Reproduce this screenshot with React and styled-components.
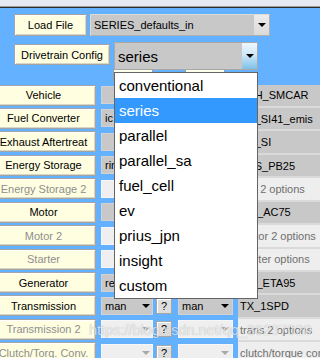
import React from 'react';
import styled, { createGlobalStyle } from 'styled-components';

const GlobalStyle = createGlobalStyle`
  html, body {
    margin: 0;
    padding: 0;
  }
  body {
    background: #63b1ff;
    font-family: "Liberation Sans", Arial, sans-serif;
    overflow: hidden;
  }
`;

const Page = styled.div`
  position: relative;
  width: 320px;
  height: 358px;
  overflow: hidden;
  background: #63b1ff;
`;

const TopStrip = styled.div`
  height: 6px;
  background: #e6e8f2;
  border-bottom: 1px solid #9a9a9a;
  box-shadow: 0 1px 0 #2c2c2c;
  margin-bottom: 1px;
`;

const Main = styled.div`
  padding: 6px 0 0 14px;
`;

const FileRow = styled.div`
  display: flex;
  align-items: flex-start;
  gap: 3px;
  height: 22px;
  margin-bottom: 6px;
`;

const ConfigRow = styled.div`
  display: flex;
  align-items: flex-start;
  gap: 4px;
  height: 28px;
`;

const YellowButton = styled.div`
  box-sizing: border-box;
  width: ${(p) => p.$w}px;
  height: ${(p) => p.$h || 21}px;
  margin-top: ${(p) => p.$top || 0}px;
  display: flex;
  align-items: center;
  justify-content: center;
  background: #fffee0;
  border: 1px solid #a4a4a4;
  box-shadow: inset 1px 1px 0 #ffffff, inset -1px -1px 0 #d6d6c4;
  font-size: 11px;
  color: ${(p) => (p.$disabled ? '#8e8e8e' : '#000')};
  white-space: nowrap;
  overflow: hidden;
  flex-shrink: 0;
`;

const FileSelect = styled.div`
  box-sizing: border-box;
  width: 180px;
  height: 22px;
  display: flex;
  align-items: center;
  background: #c8c8c8;
  border: 1px solid #dcdcdc;
  border-right-color: #b0b0b0;
  border-bottom-color: #b0b0b0;
  font-size: 11px;
  color: #000;
`;

const SelectText = styled.span`
  flex: 1;
  padding-left: ${(p) => p.$pad || 3}px;
  white-space: nowrap;
  overflow: hidden;
`;

const ArrowBox = styled.div`
  width: ${(p) => p.$w || 14}px;
  height: 100%;
  display: flex;
  align-items: center;
  justify-content: center;
  background: ${(p) =>
    p.$blue
      ? 'linear-gradient(#eef7fd, #cfe8f8 45%, #7ec0e8)'
      : p.$plain
      ? 'transparent'
      : 'linear-gradient(#ececec, #dadada)'};
  flex-shrink: 0;
`;

const Tri = styled.span`
  width: 0;
  height: 0;
  border-left: 4px solid transparent;
  border-right: 4px solid transparent;
  border-top: 4px solid ${(p) => (p.$disabled ? '#a8a8a8' : '#000')};
`;

const SeriesWrap = styled.div`
  position: relative;
  width: 144px;
  height: 28px;
`;

const SeriesSelect = styled.div`
  box-sizing: border-box;
  height: 100%;
  display: flex;
  align-items: center;
  background: #c8c8c8;
  border: 1px solid #a9a9a9;
  font-size: 15px;
  color: #000;
`;

const DropList = styled.ul`
  position: absolute;
  left: 0;
  top: 30px;
  z-index: 10;
  box-sizing: border-box;
  width: 144px;
  margin: 0;
  padding: 0;
  list-style: none;
  background: #fff;
  border: 1px solid #646464;
  font-size: 15px;
`;

const DropItem = styled.li`
  height: 25px;
  line-height: 25px;
  padding-left: 4px;
  color: ${(p) => (p.$active ? '#fff' : '#000')};
  background: ${(p) => (p.$active ? '#3399ff' : 'transparent')};
`;

const HeaderRow = styled.div`
  display: flex;
  height: 14.5px;
  padding-left: 99px;
  gap: 32px;
`;

const HeaderTab = styled.div`
  box-sizing: border-box;
  width: 40px;
  height: 12px;
  margin-top: -1px;
  background: #fdfdec;
  border: 1px solid #9c9c9c;
`;

const Rows = styled.div`
  display: flex;
  flex-direction: column;
  gap: 2.45px;
  margin-left: -23px;
`;

const Row = styled.div`
  display: flex;
  align-items: center;
  height: 21px;
`;

const Field = styled.div`
  box-sizing: border-box;
  width: ${(p) => p.$w}px;
  height: ${(p) => p.$h || 18}px;
  margin-left: ${(p) => p.$ml}px;
  display: flex;
  align-items: center;
  background: ${(p) => (p.$disabled ? '#efefef' : '#c8c8c8')};
  border: 1px solid ${(p) => (p.$disabled ? '#f6f6f6' : '#d2d2d2')};
  font-size: 11px;
  color: ${(p) => (p.$disabled ? '#7a7a7a' : '#000')};
  flex-shrink: 0;
`;

const InfoField = styled.div`
  box-sizing: border-box;
  flex: 1;
  height: 23.45px;
  margin-left: 5px;
  margin-bottom: -2.45px;
  display: flex;
  align-items: center;
  padding-left: 2px;
  background: ${(p) => (p.$disabled ? '#eeeeee' : '#c8c8c8')};
  border-bottom: 2px solid #dadada;
  font-size: 11px;
  color: ${(p) => (p.$disabled ? '#6e6e6e' : '#000')};
  white-space: nowrap;
  overflow: hidden;
`;

const HelpButton = styled.div`
  box-sizing: border-box;
  width: 16px;
  height: 16px;
  margin-left: 3px;
  display: flex;
  align-items: center;
  justify-content: center;
  background: #dedede;
  border: 1px solid #a6a6a6;
  box-shadow: inset 1px 1px 0 #fff;
  font-size: 11px;
  color: #000;
  flex-shrink: 0;
`;

const Watermark = styled.div`
  position: absolute;
  left: 89px;
  top: 322px;
  font-size: 14.5px;
  color: rgba(255, 255, 255, 0.72);
  text-shadow: 0 0 1px rgba(0, 0, 0, 0.3);
  white-space: nowrap;
  pointer-events: none;
  z-index: 20;
`;

const options = [
  'conventional',
  'series',
  'parallel',
  'parallel_sa',
  'fuel_cell',
  'ev',
  'prius_jpn',
  'insight',
  'custom',
];

const rows = [
  { label: 'Vehicle', c1: '', c3: 'VEH_SMCAR' },
  { label: 'Fuel Converter', c1: 'ic', c3: 'FC_SI41_emis' },
  { label: 'Exhaust Aftertreat', c1: '', c3: 'EX_SI' },
  { label: 'Energy Storage', c1: 'rint', c3: 'ESS_PB25' },
  { label: 'Energy Storage 2', disabled: true, c3: 'ess 2 options' },
  { label: 'Motor', c1: '', c3: 'MC_AC75' },
  { label: 'Motor 2', disabled: true, c3: 'motor 2 options' },
  { label: 'Starter', disabled: true, c3: 'starter options' },
  { label: 'Generator', c1: 'reg', c3: 'GC_ETA95' },
  { label: 'Transmission', c1: 'man', c2: 'man', c3: 'TX_1SPD' },
  { label: 'Transmission 2', disabled: true, c3: 'trans 2 options' },
  { label: 'Clutch/Torq. Conv.', disabled: true, c3: 'clutch/torque converter options' },
];

const ComponentRow = ({ row }) => (
  <Row>
    <YellowButton $w={105} $h={21} $disabled={row.disabled}>
      {row.label}
    </YellowButton>
    <Field $w={52} $ml={5} $disabled={row.disabled}>
      <SelectText>{row.c1}</SelectText>
      <ArrowBox $plain $w={13}>
        <Tri $disabled={row.disabled} />
      </ArrowBox>
    </Field>
    <HelpButton>?</HelpButton>
    <Field $w={55} $ml={6} $disabled={row.disabled || !row.c2}>
      <SelectText>{row.c2}</SelectText>
      <ArrowBox $plain $w={14}>
        <Tri $disabled={row.disabled || !row.c2} />
      </ArrowBox>
    </Field>
    <InfoField $disabled={row.disabled}>{row.c3}</InfoField>
  </Row>
);

const App = () => (
  <Page>
    <GlobalStyle />
    <TopStrip />
    <Main>
      <FileRow>
        <YellowButton $w={73} $h={22}>
          Load File
        </YellowButton>
        <FileSelect>
          <SelectText $pad={3}>SERIES_defaults_in</SelectText>
          <ArrowBox $w={15}>
            <Tri />
          </ArrowBox>
        </FileSelect>
      </FileRow>
      <ConfigRow>
        <YellowButton $w={96} $h={21} $top={2}>
          Drivetrain Config
        </YellowButton>
        <SeriesWrap>
          <SeriesSelect>
            <SelectText $pad={3}>series</SelectText>
            <ArrowBox $blue $w={15}>
              <Tri />
            </ArrowBox>
          </SeriesSelect>
          <DropList>
            {options.map((o) => (
              <DropItem key={o} $active={o === 'series'}>
                {o}
              </DropItem>
            ))}
          </DropList>
        </SeriesWrap>
      </ConfigRow>
      <HeaderRow>
        <HeaderTab />
        <HeaderTab />
      </HeaderRow>
      <Rows>
        {rows.map((r) => (
          <ComponentRow key={r.label} row={r} />
        ))}
      </Rows>
    </Main>
    <Watermark>https://blog.csdn.net/qq_36237020</Watermark>
  </Page>
);

export default App;
